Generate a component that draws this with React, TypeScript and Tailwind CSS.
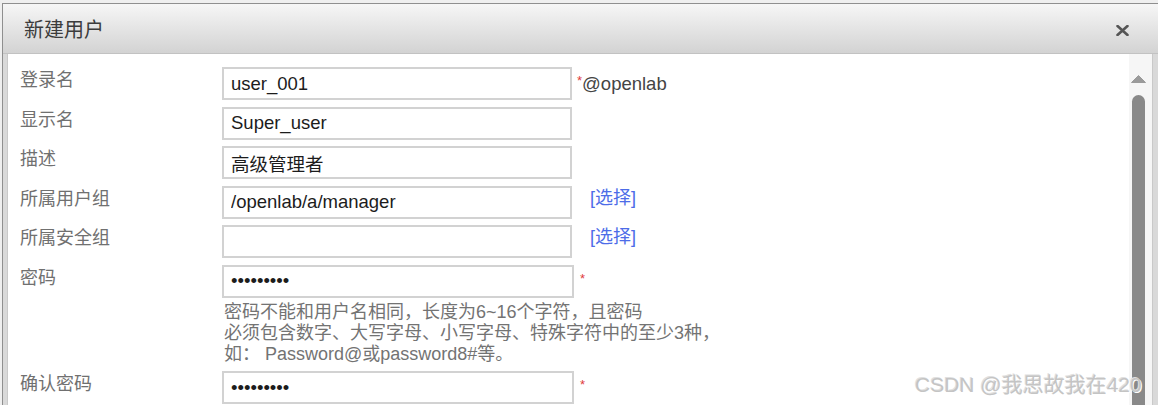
import React from "react";

const FONT = {
  fontFamily: '"Liberation Sans", "Noto Sans CJK SC", sans-serif',
};

const Label: React.FC<{ text: string }> = ({ text }) => (
  <div className="w-[202px] shrink-0 pt-[3px] text-[18px] leading-[21px] text-[#707070]">
    {text}
  </div>
);

const Star: React.FC<{ ml?: string }> = ({ ml = "ml-[5px]" }) => (
  <span className={`${ml} self-start mt-[7px] text-[13px] leading-[13px] text-[#e03a3a]`}>*</span>
);

const TextInput: React.FC<{ value?: string; type?: string; wide?: boolean }> = ({
  value = "",
  type = "text",
  wide = false,
}) => (
  <input
    readOnly
    type={type}
    defaultValue={value}
    className={`${wide ? "w-[352px]" : "w-[350px]"} h-[33px] shrink-0 border-2 border-[#d2d2d2] bg-white px-[7px] text-[18.5px] text-[#1c1c1c] outline-none`}
    style={FONT}
  />
);

const Pick: React.FC = () => (
  <span className="ml-[18px] pt-[2px] text-[18px] leading-[21px] text-[#4d6ce8]">[选择]</span>
);

const App: React.FC = () => {
  return (
    <div
      className="relative w-[1158px] h-[405px] overflow-hidden bg-[#efefef] pt-[3px] pl-[2px]"
      style={FONT}
    >
      <div className="flex h-full flex-col border-t border-l border-[#8f8f8f] bg-[#d9d9d9]">
        {/* header */}
        <div className="flex h-[50px] shrink-0 items-center justify-between border-b border-[#c2c2c2] bg-gradient-to-b from-[#f6f6f6] to-[#d3d3d3] pl-[21px] pr-[29px] pt-[2px]">
          <span className="text-[20px] text-[#3c3c3c]">新建用户</span>
          <svg width="13" height="11" viewBox="0 0 13 11" className="mt-[1px]">
            <path d="M1.5 1 L11.5 10 M11.5 1 L1.5 10" stroke="#555" strokeWidth="2.6" strokeLinecap="round" />
          </svg>
        </div>

        {/* body */}
        <div className="ml-[4px] mr-[5px] flex flex-1 border-l border-r border-[#c9c9c9] bg-white">
          <div className="flex flex-1 flex-col gap-[6.5px] pl-[12px] pt-[13px]">
            <div className="flex items-start">
              <Label text="登录名" />
              <div className="flex h-[33px] items-center">
                <TextInput value="user_001" />
                <Star />
                <span className="text-[18.5px] text-[#444]">@openlab</span>
              </div>
            </div>

            <div className="flex items-start">
              <Label text="显示名" />
              <TextInput value="Super_user" />
            </div>

            <div className="flex items-start">
              <Label text="描述" />
              <TextInput value="高级管理者" />
            </div>

            <div className="flex items-start">
              <Label text="所属用户组" />
              <TextInput value="/openlab/a/manager" />
              <Pick />
            </div>

            <div className="flex items-start">
              <Label text="所属安全组" />
              <TextInput />
              <Pick />
            </div>

            <div className="flex items-start">
              <Label text="密码" />
              <div className="flex flex-col">
                <div className="flex h-[33px] items-center">
                  <TextInput type="password" value="123456789" wide />
                  <Star ml="ml-[6px]" />
                </div>
                <div className="ml-[2px] mt-[4px] text-[18px] leading-[21px] text-[#737373]">
                  密码不能和用户名相同，长度为6~16个字符，且密码
                  <br />
                  必须包含数字、大写字母、小写字母、特殊字符中的至少3种，
                  <br />
                  如： Password@或password8#等。
                </div>
              </div>
            </div>

            <div className="flex items-start">
              <Label text="确认密码" />
              <div className="flex h-[33px] items-center">
                <TextInput type="password" value="123456789" wide />
                <Star ml="ml-[6px]" />
              </div>
            </div>
          </div>

          {/* scrollbar */}
          <div className="flex w-[23px] shrink-0 flex-col bg-[#f6f6f6] pl-[2px] pt-[21px]">
            <svg width="15" height="8" viewBox="0 0 15 8">
              <path d="M7.5 0.5 L14.5 7.5 L0.5 7.5 Z" fill="#9b9b9b" strokeLinejoin="round" stroke="#9b9b9b" />
            </svg>
            <div className="ml-[1px] mt-[12px] w-[13px] flex-1 rounded-t-[7px] bg-[#898989]" />
          </div>
        </div>
      </div>

      {/* watermark */}
      <div className="absolute left-[915px] top-[372px] whitespace-nowrap text-[21px] leading-[26px] text-[#c4c4c4] [text-shadow:1px_1px_0_#ffffff,-1px_-1px_0_#e0e0e0]">
        CSDN @我思故我在420
      </div>
    </div>
  );
};

export default App;
